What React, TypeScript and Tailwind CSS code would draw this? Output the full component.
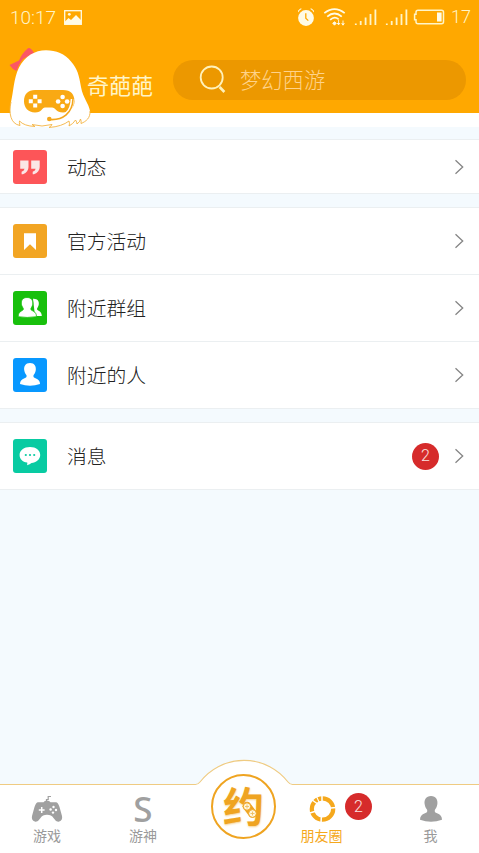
import type { ReactNode } from "react";

const StatusBar = () => {
  return (
    <div className="flex items-center h-[34px] pl-[10px] pr-[8px] text-[#fff5c8]">
      <span className="font-[Roboto] font-light text-[19px] leading-none w-[54px] whitespace-nowrap">
        10:17
      </span>
      <svg className="w-[18px] h-[15px]" viewBox="0 0 18 15">
        <rect x="0.7" y="0.7" width="16.6" height="13.6" fill="none" stroke="#fffbe6" strokeWidth="1.3" />
        <circle cx="5.3" cy="4.3" r="1.4" fill="#fffbe6" />
        <path d="M1 14 L1 11.5 L4.5 8 L7 10 L12 5 L17 10 V14 Z" fill="#fffbe6" />
      </svg>
      <svg className="ml-auto w-[155px] h-[22px]" viewBox="0 0 155 22">
        <g fill="#fffbe6">
          <circle cx="10" cy="12" r="7.9" />
          <path d="M2 6.5 A11 11 0 0 1 6 2.8 L4.3 2.6 L2 4.8 Z M18 6.5 A11 11 0 0 0 14 2.8 L15.7 2.6 L18 4.8 Z" />
        </g>
        <path d="M9.8 7.3 V12.2 L12.3 14.6" fill="none" stroke="#ffa800" strokeWidth="1.3" />
        <g fill="none" stroke="#fffbe6" strokeWidth="1.7">
          <path d="M28.3 7.2 Q38.5 -0.8 48.7 7.2" />
          <path d="M31.2 10.6 Q38.5 4.4 45.8 10.6" />
          <path d="M34.1 13.8 Q38.5 9.6 42.5 13.2" />
        </g>
        <path
          d="M36.7 17.2 L38.5 15.8 L40.3 17.2 L38.5 19.2 Z M42.6 13.5 V18.5 M41.2 17 L42.6 18.8 L44 17 M47 14.5 V19 M45.6 17.4 L47 19.2 L48.4 17.4"
          fill="#fffbe6"
          stroke="#fffbe6"
          strokeWidth="0.9"
        />
        <path
          d="M59.8 19 V17.5 M64.7 19 V15 M69.6 19 V11.5 M74.5 19 V8 M79.4 19 V3.5 M90.8 19 V17.5 M95.7 19 V15 M100.6 19 V11.5 M105.5 19 V8 M110.4 19 V3.5"
          stroke="#fff5c8"
          strokeWidth="1.8"
        />
        <path
          d="M122 4.2 H145.5 Q147.5 4.2 147.5 6.2 V15.8 Q147.5 17.8 145.5 17.8 H122 Q120 17.8 120 15.8 V13.8 H118.6 V8.2 H120 V6.2 Q120 4.2 122 4.2 Z"
          fill="none"
          stroke="#fff5c8"
          strokeWidth="1.5"
        />
        <rect x="141" y="6.5" width="4.6" height="9" fill="#fffbe6" />
      </svg>
      <span className="font-[Roboto] font-light text-[18px] leading-none">17</span>
    </div>
  );
};

const Mascot = () => {
  return (
    <svg className="absolute left-[8px] top-[46px] w-[84px] h-[84px]" viewBox="8 46 84 84">
      <path
        d="M9.5 65 L19 60.5 Q22 53 28 48.2 Q31 47.5 34 53 L23 59 Q20 62 16.5 71 Q12 69 9.5 65 Z"
        fill="#fb5765"
      />
      <path
        d="M46 50.3 C35 50.3 25 56 19 67.5 C13.5 79 13.5 92 11 102 C8.5 113 10.5 124 20 125.5 Q19 122 19.5 121 Q24 126 35 126.5 L32 124.5 Q42 127.5 52 124.5 Q51 126.5 49 127.5 Q62 126.5 69 121 Q70 124 69 126 Q73 124 75.5 120 Q77 122 77 124 Q80 122 80.5 119 Q81.5 121 81 123.5 C86 121.5 90.5 118 90 111 C89 104 83 98 81 87 C79 75 77.5 69 71 61.5 C65 54 56 50.3 46 50.3 Z"
        fill="#fff"
      />
      <path
        d="M11 102 C8.5 113 10.5 124 20 125.5 Q19 122 19.5 121 Q24 126 35 126.5 L32 124.5 Q42 127.5 52 124.5 Q51 126.5 49 127.5 Q62 126.5 69 121 Q70 124 69 126 Q73 124 75.5 120 Q77 122 77 124 Q80 122 80.5 119 Q81.5 121 81 123.5 C86 121.5 90.5 118 90 111"
        fill="none"
        stroke="#f4b341"
        strokeWidth="0.9"
      />
      <path
        d="M35 90 H63 C71 90 74.5 94.5 74.5 101.3 C74.5 108 69 112.5 63 112.5 C56 112.5 55.5 107.5 52 107.5 H45 C42 107.5 42 112.5 35 112.5 C28 112.5 24 107.5 24 101.3 C24 94 28 90 35 90 Z"
        fill="#f9a913"
      />
      <path
        d="M33.2 94.8 h4 v4 h-4z M33.2 103.6 h4 v4 h-4z M28.8 99.2 h4 v4 h-4z M37.6 99.2 h4 v4 h-4z"
        fill="#fff"
      />
      <g fill="#fff">
        <circle cx="62.6" cy="97" r="2.3" />
        <circle cx="62.6" cy="106" r="2.3" />
        <circle cx="58.1" cy="101.5" r="2.3" />
        <circle cx="67.1" cy="101.5" r="2.3" />
      </g>
      <path d="M72.5 99 C72 113 63 119 53 118.5" fill="none" stroke="#fff" strokeWidth="3.6" />
      <path d="M73 99 C72.5 113 63 120.5 49.5 119.5" fill="none" stroke="#f4a71c" strokeWidth="1.6" />
      <circle cx="49.3" cy="119" r="2.3" fill="#f4a71c" />
    </svg>
  );
};

const Header = () => {
  return (
    <header className="relative h-[113px] bg-[#ffa800]">
      <StatusBar />
      <div className="flex items-center h-[79px] pl-[87px] pr-[13px]">
        <span className="w-[86px] mt-[20px] text-[22px] leading-none text-[#fff5c8] whitespace-nowrap">
          奇葩葩
        </span>
        <div className="flex items-center flex-1 h-10 mt-[13px] pl-[26px] rounded-full bg-[#ec9800]">
          <svg className="w-[28px] h-[30px] -mt-[2px]" viewBox="0 0 28 30" fill="none" stroke="#fff1ba">
            <circle cx="12.7" cy="13.5" r="11" strokeWidth="1.8" />
            <path d="M20.6 23 L25.4 28" strokeWidth="2.6" />
          </svg>
          <span className="-mt-[2px] ml-[13px] font-light text-[21.3px] leading-none text-[#ffd38a]">
            梦幻西游
          </span>
        </div>
      </div>
      <Mascot />
    </header>
  );
};

const person =
  "M17 5 C21.6 5 23.3 8.5 22.8 12 C22.4 15 21 16.5 20.5 17.3 C20 19 21 19.7 22.5 20.3 C25.5 21.5 27 23 27 26 Q22 27.8 17 27.8 Q12 27.8 7 26 C7 23 8.5 21.5 11.5 20.3 C13 19.7 14 19 13.5 17.3 C13 16.5 11.6 15 11.2 12 C10.7 8.5 12.4 5 17 5 Z";

type Row = {
  label: string;
  color: string;
  height: string;
  icon: ReactNode;
  badge?: number;
};

const groups: Row[][] = [
  [
    {
      label: "动态",
      color: "bg-[#fd5558]",
      height: "h-[54px]",
      icon: (
        <path
          d="M7.2 10.5 H15.5 V17 Q15.5 22 10 24.2 H8.6 V21.8 Q11.5 20.8 11.5 18.8 H7.2 Z M18.2 10.5 H26.7 V17 Q26.7 22 21 24.2 H19.7 V21.8 Q22.6 20.8 22.6 18.8 H18.2 Z"
          fill="#fbe6e6"
        />
      ),
    },
  ],
  [
    {
      label: "官方活动",
      color: "bg-[#f2a523]",
      height: "h-[67px]",
      icon: <path d="M11 9.3 H23 V26 L17 20.3 L11 26 Z" fill="#fff" />,
    },
    {
      label: "附近群组",
      color: "bg-[#18c00c]",
      height: "h-[67px]",
      icon: (
        <>
          <path
            d="M20 7.8 C24.6 7.5 26.5 10.5 25.7 14 C25.2 16 24 17 24 18.3 C24.3 20 28.8 20 28.8 25 H22 Z"
            fill="#fff"
          />
          <path
            d="M14 6.5 C18.7 6.5 20.2 9.8 19.7 13.3 C19.4 15.7 18 16.8 17.8 18 C17.8 20.3 23.5 19.5 23.5 25.7 Q14 27.2 5.2 25.7 C5.2 19.5 10.4 20.3 10.4 18 C10.2 16.8 8.8 15.7 8.4 13.3 C7.9 9.8 9.6 6.5 14 6.5 Z"
            fill="#fff"
            stroke="#18c00c"
            strokeWidth="0.8"
          />
        </>
      ),
    },
    {
      label: "附近的人",
      color: "bg-[#0898ff]",
      height: "h-[67px]",
      icon: <path d={person} fill="#fff" />,
    },
  ],
  [
    {
      label: "消息",
      color: "bg-[#08cba2]",
      height: "h-[67px]",
      icon: (
        <>
          <path
            d="M17 8 C23 8 27.2 11.5 27.2 16 C27.2 20.5 23 23.8 18.5 24 Q17 25.6 14 26.3 Q14.6 24.8 14.2 23.6 C9.5 22.8 6.6 20 6.6 16 C6.6 11.5 11 8 17 8 Z"
            fill="#fff"
          />
          <g fill="#08cba2">
            <circle cx="12.8" cy="16" r="1.1" />
            <circle cx="17" cy="16" r="1.1" />
            <circle cx="21.2" cy="16" r="1.1" />
          </g>
        </>
      ),
      badge: 2,
    },
  ],
];

const Badge = ({ count }: { count: number }) => {
  return (
    <span className="flex items-center justify-center rounded-full w-[27px] h-[27px] bg-[#d62b2b] text-[#fbe3e0] font-[Roboto] font-light text-[16px] leading-none">
      {count}
    </span>
  );
};

const MenuRow = ({ row }: { row: Row }) => {
  return (
    <div className={`flex items-center pl-[13px] pr-[14px] border-b border-[#ebeff1] ${row.height}`}>
      <div className={`w-[34px] h-[34px] rounded-[3px] ${row.color}`}>
        <svg className="w-full h-full" viewBox="0 0 34 34">
          {row.icon}
        </svg>
      </div>
      <span className="ml-[20px] font-light text-[19.8px] leading-none text-[#222]">
        {row.label}
      </span>
      <div className="flex items-center ml-auto gap-[15px]">
        {row.badge && <Badge count={row.badge} />}
        <svg className="w-[11px] h-[16px]" viewBox="0 0 11 16">
          <path d="M1.5 1.3 L8.7 8 L1.5 14.7" fill="none" stroke="#858585" strokeWidth="1.3" />
        </svg>
      </div>
    </div>
  );
};

const TabLabel = ({ text, active }: { text: string; active?: boolean }) => {
  return (
    <span
      className={`text-[14px] leading-[18px] whitespace-nowrap ${active ? "text-[#f5a81c]" : "text-[#9a9a9a]"}`}
    >
      {text}
    </span>
  );
};

const TabBar = () => {
  return (
    <nav className="relative flex h-[68px] bg-white">
      <svg className="absolute left-0 -top-[26px] w-[479px] h-[30px]" viewBox="0 0 479 30">
        <path
          d="M0 25.5 H195.5 Q198 25.5 200 23 A55.5 55.5 0 0 1 288 23 Q290 25.5 292.5 25.5 H479 V30 H0 Z"
          fill="#fff"
        />
        <path
          d="M0 25.5 H195.5 Q198 25.5 200 23 A55.5 55.5 0 0 1 288 23 Q290 25.5 292.5 25.5 H479"
          fill="none"
          stroke="#efcb82"
          strokeWidth="1.1"
        />
      </svg>
      <div className="flex flex-col items-center w-[94px] pt-[10px]">
        <svg className="w-[32px] h-[28px] mb-[3px]" viewBox="0 0 32 28">
          <path d="M15.5 8 V4.5 H17.2 V1.5 H20" fill="none" stroke="#a0a0a0" strokeWidth="1.2" />
          <path
            d="M7 7.3 H12.5 Q13.5 5.5 16 5.5 Q18.5 5.5 19.5 7.3 H25 Q27 7.3 28.5 12 L31 21 Q32 25.8 27.5 26.7 Q25 27 22.5 23 Q20.5 19.8 16 19.8 Q11.5 19.8 9.5 23 Q7 27 4.5 26.7 Q0 25.8 1 21 L3.5 12 Q5 7.3 7 7.3 Z"
            fill="#a0a0a0"
          />
          <path d="M7.8 15 H13.6 M10.7 12.1 V17.9" stroke="#fff" strokeWidth="1.5" />
          <g fill="#fff">
            <circle cx="22.5" cy="12" r="1.2" />
            <circle cx="19.6" cy="14.5" r="1.2" />
            <circle cx="25" cy="15" r="1.2" />
            <circle cx="22" cy="17.6" r="1.2" />
          </g>
        </svg>
        <TabLabel text="游戏" />
      </div>
      <div className="flex flex-col items-center w-[98px] pt-[10px]">
        <span className="h-[28px] mb-[3px] font-['Noto_Sans'] font-medium text-[35px] leading-[28px] text-[#a0a0a0]">
          S
        </span>
        <TabLabel text="游神" />
      </div>
      <div className="flex justify-center w-[103px]">
        <div className="relative flex items-center justify-center w-[65px] h-[65px] -mt-[11px] rounded-full border-2 border-[#efa421] bg-white">
          <span className="-mt-[5px] font-bold text-[41px] leading-none text-[#efa421] [text-shadow:0_1px_2px_#f7d28d]">
            约
          </span>
          <svg className="absolute left-[29px] top-[25px] w-[17px] h-[19px]" viewBox="0 0 17 19">
            <path d="M5 5 L10.5 12.5" stroke="#efa421" strokeWidth="8.5" strokeLinecap="round" />
            <g fill="#fff7dd" stroke="#efa421" strokeWidth="1">
              <circle cx="5" cy="5.5" r="3.7" />
              <circle cx="10.5" cy="12.5" r="3.9" />
            </g>
            <path d="M3 5.5 H7 M5 3.5 V7.5 M8.5 12.5 H12.5 M10.5 10.5 V14.5" stroke="#edbd62" strokeWidth="0.9" />
          </svg>
        </div>
      </div>
      <div className="relative flex flex-col items-center w-[53px] pt-[10px]">
        <svg className="w-[28px] h-[28px] mb-[3px]" viewBox="0 0 28 28">
          <circle cx="14.5" cy="14" r="10.7" fill="none" stroke="#f5a81c" strokeWidth="4.2" />
          <path
            d="M14 9 V0 M18 13.5 L28 12.5 M13.5 19 L13 28 M10 15.5 L0 18.5 M11 10 L3.5 4.5"
            stroke="#fff"
            strokeWidth="1.5"
          />
          <path d="M11.5 8 L8.5 1.5" stroke="#fff" strokeWidth="1.1" />
        </svg>
        <TabLabel text="朋友圈" active />
        <div className="absolute left-[50px] top-[8px]">
          <Badge count={2} />
        </div>
      </div>
      <div className="flex flex-col items-center w-[97px] ml-[34px] pt-[10px]">
        <svg className="w-[24px] h-[28px] mb-[3px]" viewBox="5 4 24 25" preserveAspectRatio="none">
          <path d={person} fill="#a0a0a0" transform="translate(-1.7 0) scale(1.1 1)" />
        </svg>
        <TabLabel text="我" />
      </div>
    </nav>
  );
};

const App = () => {
  return (
    <div className="flex flex-col w-[479px] h-[853px] overflow-hidden bg-[#f4fafe] font-['Noto_Sans_CJK_SC',sans-serif]">
      <Header />
      <div className="h-[14px] bg-white" />
      <main className="flex flex-col gap-[13px] flex-1 pt-[12px]">
        {groups.map((rows) => (
          <div key={rows[0].label} className="bg-white border-t border-[#ebeff1]">
            {rows.map((row) => (
              <MenuRow key={row.label} row={row} />
            ))}
          </div>
        ))}
      </main>
      <TabBar />
    </div>
  );
};

export default App;
